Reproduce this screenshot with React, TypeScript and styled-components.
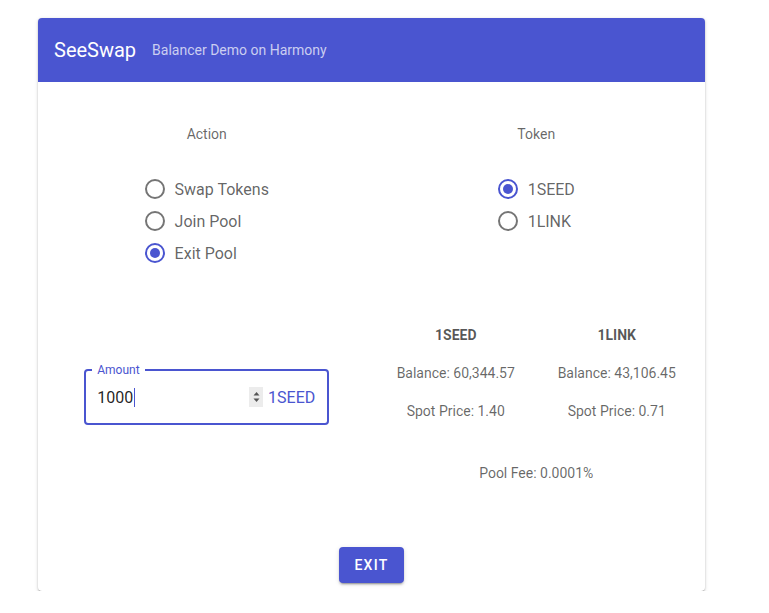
import styled, { createGlobalStyle } from "styled-components";

const INDIGO = "#4a55d0";

const GlobalStyle = createGlobalStyle`
  html, body {
    margin: 0;
    padding: 0;
    background: #ffffff;
    font-family: Roboto, "Liberation Sans", Arial, sans-serif;
  }
`;

const Page = styled.div`
  padding: 18px 0 0 38px;
`;

const Card = styled.section`
  width: 667px;
  background: #fff;
  border-radius: 4px;
  overflow: hidden;
  box-shadow: 0px 2px 1px -1px rgba(0, 0, 0, 0.25), 0px 1px 2px 0px rgba(0, 0, 0, 0.2),
    0px 1px 4px 0px rgba(0, 0, 0, 0.12);
`;

const Header = styled.header`
  height: 64px;
  background: ${INDIGO};
  display: flex;
  align-items: center;
  gap: 16px;
  padding: 0 16px;
`;

const Title = styled.h1`
  margin: 0;
  font-size: 20px;
  font-weight: 400;
  color: #fff;
`;

const Subtitle = styled.span`
  font-size: 14px;
  color: rgba(255, 255, 255, 0.72);
`;

const Body = styled.div`
  padding: 42px 4px 8px;
`;

const TwoCols = styled.div<{ $top?: number }>`
  display: grid;
  grid-template-columns: 1fr 1fr;
  margin-top: ${(p) => p.$top ?? 0}px;
`;

const Column = styled.div`
  display: flex;
  flex-direction: column;
  align-items: center;
`;

const GroupLabel = styled.div`
  font-size: 14px;
  line-height: 20px;
  color: rgba(0, 0, 0, 0.6);
`;

const RadioList = styled.div`
  margin-top: 29px;
  display: flex;
  flex-direction: column;
`;

const RadioRow = styled.label`
  height: 32px;
  display: flex;
  align-items: center;
  gap: 10px;
  font-size: 16px;
  color: rgba(0, 0, 0, 0.62);
  cursor: pointer;
`;

const RadioCircle = styled.span<{ $on: boolean }>`
  width: 20px;
  height: 20px;
  box-sizing: border-box;
  border-radius: 50%;
  border: 2px solid ${(p) => (p.$on ? INDIGO : "rgba(0, 0, 0, 0.54)")};
  display: flex;
  align-items: center;
  justify-content: center;
  &::after {
    content: "";
    width: 10px;
    height: 10px;
    border-radius: 50%;
    background: ${INDIGO};
    display: ${(p) => (p.$on ? "block" : "none")};
  }
`;

const Field = styled.div`
  position: relative;
  margin-top: 44px;
  width: 245px;
  height: 56px;
  box-sizing: border-box;
  border: 2px solid ${INDIGO};
  border-radius: 4px;
  display: flex;
  align-items: center;
  padding: 0 12px 0 11px;
`;

const FieldLabel = styled.span`
  position: absolute;
  top: -9px;
  left: 6px;
  padding: 0 5px;
  background: #fff;
  font-size: 12px;
  line-height: 16px;
  color: ${INDIGO};
`;

const FieldValue = styled.span`
  flex: 1;
  display: flex;
  align-items: center;
  font-size: 16px;
  color: rgba(0, 0, 0, 0.87);
`;

const Caret = styled.span`
  display: inline-block;
  width: 1px;
  height: 19px;
  margin-left: 1px;
  background: ${INDIGO};
`;

const Spinner = styled.span`
  width: 14px;
  height: 20px;
  background: #ececec;
  display: flex;
  align-items: center;
  justify-content: center;
  margin-right: 5px;
`;

const Adornment = styled.span`
  font-size: 16px;
  color: ${INDIGO};
`;

const Stats = styled.div`
  width: 322px;
  display: grid;
  grid-template-columns: 1fr 1fr;
  row-gap: 18px;
`;

const StatText = styled.div<{ $bold?: boolean }>`
  text-align: center;
  font-size: 14px;
  line-height: 20px;
  font-weight: ${(p) => (p.$bold ? 700 : 400)};
  color: ${(p) => (p.$bold ? "rgba(0, 0, 0, 0.66)" : "rgba(0, 0, 0, 0.6)")};
`;

const Fee = styled(StatText)`
  margin-top: 42px;
`;

const Footer = styled.div`
  margin-top: 64px;
  display: flex;
  justify-content: center;
`;

const Button = styled.button`
  height: 36px;
  padding: 0 15px;
  border: none;
  border-radius: 4px;
  background: ${INDIGO};
  color: #fff;
  font-family: inherit;
  font-size: 14px;
  font-weight: 500;
  letter-spacing: 1.3px;
  text-transform: uppercase;
  box-shadow: 0px 3px 1px -2px rgba(0, 0, 0, 0.2), 0px 2px 2px 0px rgba(0, 0, 0, 0.14),
    0px 1px 5px 0px rgba(0, 0, 0, 0.12);
  cursor: pointer;
`;

const actions = ["Swap Tokens", "Join Pool", "Exit Pool"];
const tokens = ["1SEED", "1LINK"];

function Radio({ label, on }: { label: string; on: boolean }) {
  return (
    <RadioRow>
      <RadioCircle $on={on} />
      {label}
    </RadioRow>
  );
}

export default function App() {
  return (
    <Page>
      <GlobalStyle />
      <Card>
        <Header>
          <Title>SeeSwap</Title>
          <Subtitle>Balancer Demo on Harmony</Subtitle>
        </Header>
        <Body>
          <TwoCols>
            <Column>
              <GroupLabel>Action</GroupLabel>
              <RadioList>
                {actions.map((a) => (
                  <Radio key={a} label={a} on={a === "Exit Pool"} />
                ))}
              </RadioList>
            </Column>
            <Column>
              <GroupLabel>Token</GroupLabel>
              <RadioList>
                {tokens.map((t) => (
                  <Radio key={t} label={t} on={t === "1SEED"} />
                ))}
              </RadioList>
            </Column>
          </TwoCols>

          <TwoCols $top={56}>
            <Column>
              <Field>
                <FieldLabel>Amount</FieldLabel>
                <FieldValue>
                  1000
                  <Caret />
                </FieldValue>
                <Spinner>
                  <svg width="7" height="12" viewBox="0 0 7 12">
                    <path d="M3.5 1 L6.5 4.5 L0.5 4.5 Z" fill="#555" />
                    <path d="M3.5 11 L6.5 7.5 L0.5 7.5 Z" fill="#555" />
                  </svg>
                </Spinner>
                <Adornment>1SEED</Adornment>
              </Field>
            </Column>
            <Column>
              <Stats>
                <StatText $bold>1SEED</StatText>
                <StatText $bold>1LINK</StatText>
                <StatText>Balance: 60,344.57</StatText>
                <StatText>Balance: 43,106.45</StatText>
                <StatText>Spot Price: 1.40</StatText>
                <StatText>Spot Price: 0.71</StatText>
              </Stats>
              <Fee>Pool Fee: 0.0001%</Fee>
            </Column>
          </TwoCols>

          <Footer>
            <Button>Exit</Button>
          </Footer>
        </Body>
      </Card>
    </Page>
  );
}
